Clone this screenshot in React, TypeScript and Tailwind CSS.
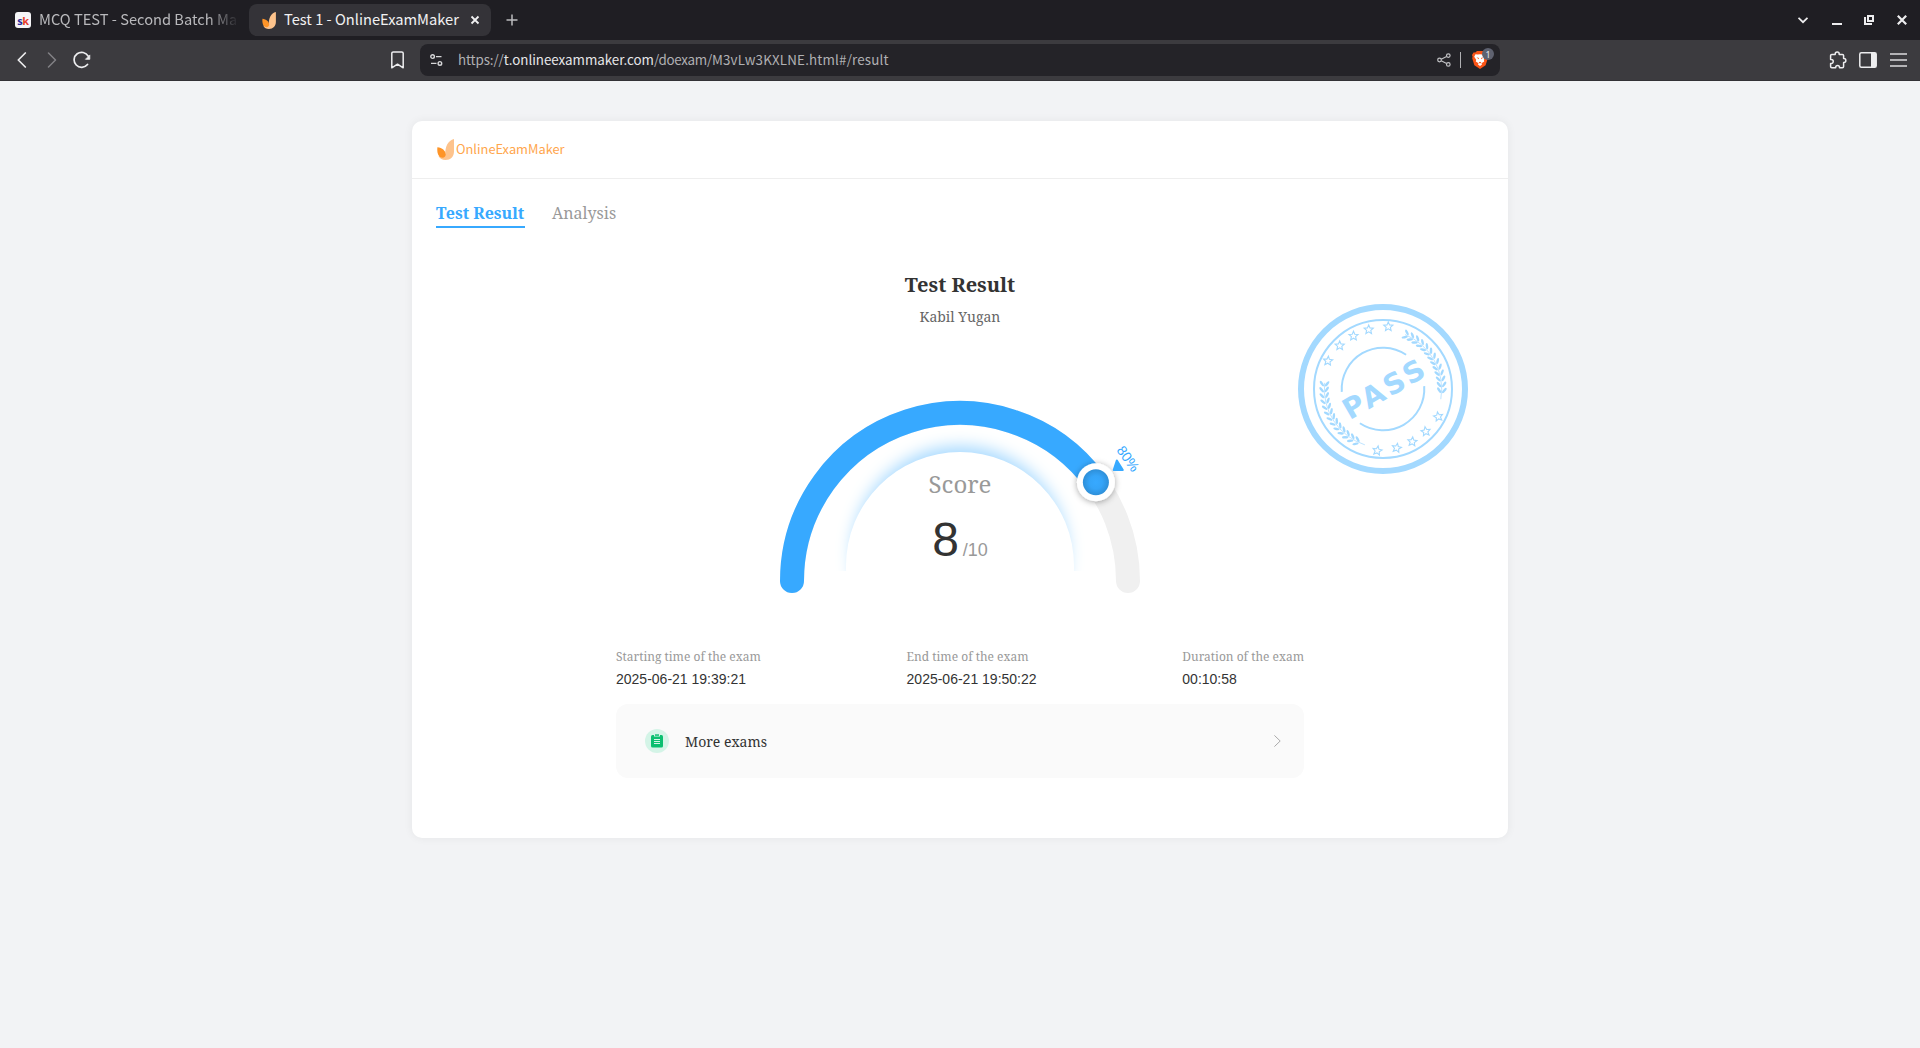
import type { ReactNode } from "react";

const STAMP = "#a3d9ff";

function LeafMark({ className }: { className: string }) {
  return (
    <svg viewBox="0 0 17 21" className={className}>
      <path d="M17 0v12.500c0 5-3.500 8.500-8.500 8.500-3.200 0-5.700-1.400-7-4l6.800-2C8 8 11 1.300 17 0Z" fill="#fdc38c" />
      <path d="M.4 8.200c4.800.5 8.200 3.400 8.300 7.300 0 1.800-1.300 3.200-3.200 3.200C2 18.700-.3 15 .4 8.200Z" fill="#fe9427" />
    </svg>
  );
}

function TabStrip() {
  return (
    <div className="flex h-10 items-center bg-[#1f1e23]">
      <div className="flex h-8 w-[249px] items-center pl-[15px]">
        <div className="flex size-4 shrink-0 items-center justify-center rounded-[3px] bg-[#f6f6f8] font-['Noto_Sans'] text-[11px] leading-none font-bold tracking-[-0.4px]">
          <span className="text-[#2a2a9c]">s</span>
          <span className="text-[#e8402c]">k</span>
        </div>
        <div className="mb-0.5 ml-2 w-[210px] [mask-image:linear-gradient(to_right,#000_168px,transparent_200px)] font-['Noto_Sans_CJK_SC',sans-serif] text-[14.67px] leading-[30px] whitespace-nowrap text-[#b9b9bc]">
          MCQ TEST - Second Batch Ma
        </div>
      </div>
      <div className="flex h-8 w-[242px] items-center rounded-lg bg-[#343338] pl-[13px]">
        <LeafMark className="h-[17px] w-[14px] shrink-0" />
        <span className="mb-0.5 ml-[8px] w-[175px] font-['Noto_Sans_CJK_SC',sans-serif] text-[14.67px] leading-[30px] whitespace-nowrap text-[#f1f1f2]">
          Test 1 - OnlineExamMaker
        </span>
        <svg viewBox="0 0 10 10" className="ml-[11px] size-[10px] shrink-0" stroke="#f1f1f2" strokeWidth="1.8">
          <path d="m1.500 1.500 7 7m0-7-7 7" />
        </svg>
      </div>
      <svg viewBox="0 0 12 12" className="ml-[15px] size-3" stroke="#bcbcbf" strokeWidth="1.500">
        <path d="M6 .5v11M.5 6h11" />
      </svg>
      <div className="ml-auto flex items-center pr-[13px]">
        <svg viewBox="0 0 10 10" className="size-[10px]" fill="none" stroke="#ededef" strokeWidth="1.800">
          <path d="m.5 2.800 4.500 4.400 4.500-4.400" />
        </svg>
        <svg viewBox="0 0 10 10" className="ml-6 size-[10px]" fill="#ededef">
          <path d="M0 8h10v2H0z" />
        </svg>
        <svg viewBox="0 0 10 10" className="ml-[22px] size-[10px]" fill="none" stroke="#ededef" strokeWidth="2">
          <path d="M4 1h5v5H4z" />
          <path d="M1 2v7h7" />
        </svg>
        <svg viewBox="0 0 10 10" className="ml-[23px] size-[10px]" stroke="#ededef" strokeWidth="2.200">
          <path d="m.8.8 8.400 8.400m0-8.400L.8 9.200" />
        </svg>
      </div>
    </div>
  );
}

function BraveShield() {
  return (
    <div className="relative ml-[11px] h-[18px] w-4">
      <svg viewBox="0 0 16 18" className="size-full">
        <path d="M5 0h6l1.700 1.600 1.800-.2L16 4l-.6 1.700.4 1.500-2.200 7L8 18l-5.600-3.800-2.200-7 .4-1.500L0 4l1.500-2.600 1.800.2Z" fill="#fb5417" />
        <path d="m3.500 3.200 2.300.4L8 3.200l2.200.4 2.300-.4 1.300 2.500-2 3 .4 1.700-2.700 1.800L10 13.600l-2 1.400-2-1.400.5-1.400-2.700-1.800.4-1.700-2-3Z" fill="#fff" />
        <path d="M4.500 6.300 7 7l-.4 1.300ZM11.500 6.300 9 7l.4 1.300ZM6.600 11.500 8 10.800l1.400.7L8 12.600Z" fill="#fb5417" />
      </svg>
      <span className="absolute -top-[3px] left-[10px] flex size-3 items-center justify-center rounded-full bg-[#5f6270] font-['Noto_Sans'] text-[9px] leading-none text-[#e4e5ea]">
        1
      </span>
    </div>
  );
}

function Toolbar() {
  return (
    <div className="flex h-[41px] items-center border-b border-[#333136] bg-[#3c3b3f]">
      <svg viewBox="0 0 10 16" className="ml-[17px] h-4 w-[10px]" fill="none" stroke="#ededef" strokeWidth="1.700" strokeLinecap="round" strokeLinejoin="round">
        <path d="M8.300 1 1.300 8l7 7" />
      </svg>
      <svg viewBox="0 0 10 16" className="ml-5 h-4 w-[10px]" fill="none" stroke="#828186" strokeWidth="1.500" strokeLinecap="round" strokeLinejoin="round">
        <path d="m1.500 1 7 7-7 7" />
      </svg>
      <svg viewBox="0 0 18 18" className="ml-4 size-[18px]" fill="none" stroke="#ededef" strokeWidth="1.700" strokeLinecap="round">
        <path d="M14.500 13.500A7.500 7.500 0 1 1 15.200 5.200" />
        <path d="M16.800 4.300v4h-4Z" fill="#ededef" strokeWidth="0.800" strokeLinejoin="round" />
      </svg>
      <svg viewBox="0 0 13 18" className="ml-[300px] h-[18px] w-[13px]" fill="none" stroke="#ededef" strokeWidth="1.500" strokeLinejoin="round">
        <path d="M.8 2.300C.8 1.400 1.400.9 2.200.9h8.600c.8 0 1.400.5 1.400 1.400v14.500l-5.700-3.600L.8 16.800Z" />
      </svg>
      <div className="ml-[16px] flex h-8 w-[1080px] items-center rounded-lg bg-[#242328]">
        <svg viewBox="0 0 13 12" className="ml-[10px] h-3 w-[13px]" fill="none" stroke="#d6d6d8" strokeWidth="1.400">
          <circle cx="2.600" cy="2.600" r="1.800" />
          <path d="M6 2.600h5.500M1 9.400h5.500" />
          <circle cx="9.900" cy="9.400" r="1.800" />
        </svg>
        <span className="mb-0.5 ml-[15px] font-['Noto_Sans_CJK_SC',sans-serif] text-[13.37px] leading-[30px] whitespace-nowrap text-[#b0b0b3]">
          <span className="tracking-[-0.12px]">https://</span>
          <span className="tracking-[-0.03px] text-[#e6e6e8]">t.onlineexammaker.com</span>
          <span className="tracking-[-0.25px]">/doexam/</span>
          <span className="tracking-[0.18px]">M3vLw3KXLNE.html#/result</span>
        </span>
        <svg viewBox="0 0 14 14" className="ml-auto size-[14px]" fill="none" stroke="#c2c2c5" strokeWidth="1.200">
          <circle cx="2.500" cy="7" r="1.800" />
          <circle cx="11.300" cy="2.600" r="1.800" />
          <circle cx="11.300" cy="11.400" r="1.800" />
          <path d="m4.200 6.200 5.400-2.700M4.200 7.800l5.400 2.700" />
        </svg>
        <div className="ml-[9px] h-4 w-px bg-[#b0b0b3]" />
        <BraveShield />
        <div className="w-3" />
      </div>
      <div className="ml-auto flex items-center pr-[13px]">
        <svg viewBox="0 0 18 18" className="size-[18px]" fill="none" stroke="#ededef" strokeWidth="1.500" strokeLinejoin="round">
          <path d="M2.800 3.400h3.400V2.900a2 2 0 0 1 4 0v.5h3.200c.7 0 1.200.5 1.200 1.200v2.900h.3a1.900 1.900 0 0 1 0 3.900h-.3v4.200c0 .7-.5 1.200-1.200 1.200h-2.900v-.5a1.900 1.900 0 0 0-3.800 0v.5H2.800c-.7 0-1.200-.5-1.200-1.200v-3h.6a2 2 0 0 0 0-4.100h-.6V4.600c0-.7.5-1.200 1.200-1.200Z" />
        </svg>
        <svg viewBox="0 0 18 16" className="ml-3 h-4 w-[18px]" fill="none" stroke="#ededef" strokeWidth="1.500">
          <rect x="0.800" y="0.800" width="16.400" height="14.400" rx="1.500" />
          <path d="M12 1h5v14h-5z" fill="#ededef" stroke="none" />
        </svg>
        <svg viewBox="0 0 17 14" className="ml-[13px] h-[14px] w-[17px]" stroke="#dcdcde" strokeWidth="1.500">
          <path d="M0 1h17M0 7h17M0 13h17" />
        </svg>
      </div>
    </div>
  );
}

function Star({ x, y, turn }: { x: number; y: number; turn: number }) {
  const points = Array.from({ length: 10 }, (_, i) => {
    const r = i % 2 === 0 ? 4.8 : 2.2;
    const a = (i * 36 - 90) * (Math.PI / 180);
    return `${(r * Math.cos(a)).toFixed(2)},${(r * Math.sin(a)).toFixed(2)}`;
  }).join(" ");
  return <polygon points={points} transform={`translate(${x} ${y}) rotate(${turn})`} fill="none" stroke={STAMP} strokeWidth="1.100" />;
}

/* One laurel branch, bent along a circle of radius 59 round the stamp's centre. */
function Branch({ from, step }: { from: number; step: number }) {
  const leaves: ReactNode[] = [];
  const flip = step < 0 ? "scale(1 -1)" : "scale(1 1)";
  for (let i = 0; i < 13; i++) {
    leaves.push(
      <g key={i} transform={`rotate(${from + step * i}) translate(58.700 0) ${flip}`}>
        <ellipse cx="2.600" cy="2.800" rx="1.250" ry="3.200" transform="rotate(-36 2.600 2.800)" />
        <ellipse cx="-2.600" cy="2.800" rx="1.250" ry="3.200" transform="rotate(36 -2.600 2.800)" />
      </g>,
    );
  }
  return <g fill={STAMP}>{leaves}</g>;
}

function arc(r: number, from: number, to: number) {
  const p = (a: number) => `${(r * Math.cos((a * Math.PI) / 180)).toFixed(2)} ${(r * Math.sin((a * Math.PI) / 180)).toFixed(2)}`;
  return `M${p(from)}A${r} ${r} 0 ${to - from > 180 ? 1 : 0} 1 ${p(to)}`;
}

const stars: [number, number, number][] = [
  [-55, -28, 5],
  [-43.3, -43.3, 0],
  [-29.5, -53, 0],
  [-14.3, -59.300, 0],
  [5.300, -62.300, 0],
  [55.300, 27.700, -10],
  [42.700, 42.500, -8],
  [29.300, 52.700, 5],
  [13.700, 59, 10],
  [-5.700, 61.700, 10],
];

function PassStamp() {
  return (
    <svg viewBox="-85 -85 170 170" className="absolute top-[183px] right-[40px] size-[170px]" fill="none" stroke={STAMP}>
      <circle r="82" strokeWidth="6" />
      <circle r="69" strokeWidth="2" />
      <path d={arc(41.300, 176, 304)} strokeWidth="2" />
      <path d={arc(41.300, -4, 124)} strokeWidth="2" />
      <g stroke="none">
        <Branch from={4} step={-5.7} />
        <Branch from={114} step={5.7} />
      </g>
      <path d={arc(58.700, -68, 10)} strokeWidth="0.700" />
      <path d={arc(58.700, 108, 186)} strokeWidth="0.700" />
      {stars.map(([x, y, t]) => (
        <Star key={`${x}`} x={x} y={y} turn={t} />
      ))}
      <text transform="rotate(-30)" x="-44.500" y="10.500" textLength="90" lengthAdjust="spacing" fill={STAMP} stroke="none" className="font-['DejaVu_Sans',sans-serif] text-[28.500px] font-bold">
        PASS
      </text>
    </svg>
  );
}

function Gauge() {
  return (
    <div className="relative mx-auto mt-[64px] h-[220px] w-[400px]">
      <div className="absolute top-0 left-0 h-[180px] w-full overflow-hidden">
        <div className="absolute top-[61px] left-[86px] size-[228px] rounded-full bg-white shadow-[0_-12px_16px_-6px_#a8daff]" />
      </div>
      <svg viewBox="0 0 400 220" className="absolute inset-0 size-full" fill="none">
        <defs>
          <radialGradient id="knob">
            <stop offset="0" stopColor="#37a9ff" />
            <stop offset=".5" stopColor="#35a4f8" />
            <stop offset="1" stopColor="#2e8fd8" />
          </radialGradient>
          <filter id="lift" x="-50%" y="-50%" width="200%" height="200%">
            <feDropShadow dx="0" dy="1" stdDeviation="3" floodColor="#000" floodOpacity=".35" />
          </filter>
        </defs>
        <path d="M32 190A168 168 0 0 1 368 190" stroke="#f0f0f0" strokeWidth="24" strokeLinecap="round" />
        <path d="M32 190A168 168 0 0 1 335.900 91.300" stroke="#37a9ff" strokeWidth="24" strokeLinecap="round" />
        <circle cx="335.900" cy="91.300" r="19" fill="#fff" filter="url(#lift)" />
        <circle cx="335.900" cy="91.300" r="13" fill="url(#knob)" />
        <path d="m356.800 69.300 6.100 9.700H353.600Z" fill="#37a9ff" stroke="#37a9ff" strokeWidth="1.800" strokeLinejoin="round" />
        <text transform="translate(365 70) rotate(54)" x="-14" y="1" fill="#37a9ff" className="font-['Liberation_Sans',sans-serif] text-[14px]">
          80%
        </text>
      </svg>
      <div className="relative pt-[75px] text-center">
        <div className="h-[35px] text-2xl leading-[35px] text-[#999]">Score</div>
        <div className="mt-[12px] flex items-baseline justify-center gap-1 font-['Liberation_Sans',sans-serif] leading-[54px]">
          <span className="text-5xl leading-[54px] text-[#333]">8</span>
          <span className="text-lg leading-none text-[#999]">/10</span>
        </div>
      </div>
    </div>
  );
}

const facts = [
  ["Starting time of the exam", "2025-06-21 19:39:21"],
  ["End time of the exam", "2025-06-21 19:50:22"],
  ["Duration of the exam", "00:10:58"],
];

export default function App() {
  return (
    <div className="min-h-[1048px] bg-[#f2f3f5] font-['Noto_Serif',serif]">
      <TabStrip />
      <Toolbar />
      <main className="relative mx-auto mt-10 h-[717px] w-[1096px] rounded-[10px] bg-white shadow-[0_0_10px_rgba(0,0,0,0.06)]">
        <header className="flex h-[58px] items-center border-b border-[#eee] pl-[25px]">
          <LeafMark className="h-[21px] w-[17px]" />
          <span className="mb-0.5 ml-[2px] font-['Noto_Sans_CJK_SC',sans-serif] text-[12.850px] leading-5 text-[#ffa64c]">OnlineExamMaker</span>
        </header>
        <nav className="flex gap-[27px] pt-[23px] pl-6 text-base leading-[23px]">
          <span className="h-[26px] w-[89px] border-b-2 border-[#37a9ff] font-bold text-[#37a9ff]">Test Result</span>
          <span className="text-[#999]">Analysis</span>
        </nav>
        <PassStamp />
        <h1 className="mt-[43px] text-center text-xl leading-7 font-bold text-[#333]">Test Result</h1>
        <p className="mt-2 text-center text-sm leading-5 text-[#666]">Kabil Yugan</p>
        <Gauge />
        <section className="mx-auto mt-9 flex w-[688px] justify-between">
          {facts.map(([label, value]) => (
            <div key={label}>
              <div className="text-xs leading-5 text-[#999]">{label}</div>
              <div className="mt-0.5 font-['Liberation_Sans',sans-serif] text-sm leading-5 text-[#333]">{value}</div>
            </div>
          ))}
        </section>
        <div className="mx-auto mt-[15px] flex h-[74px] w-[688px] items-center rounded-xl bg-[#fafafa] pr-[23px] pl-[29px]">
          <div className="flex size-6 items-center justify-center rounded-full bg-[#d4f4e7]">
            <svg viewBox="0 0 12 14" className="h-[14px] w-3">
              <rect y="1" width="12" height="12.500" rx="1.500" fill="#0bbf70" />
              <path d="M3 0h6v2.500H3Z" fill="#d4f4e7" />
              <path d="M4 .3h4v1.500H4Z" fill="#0bbf70" />
              <path d="M3 5.500h6M3 7.500h6M3 9.500h6" stroke="#d4f4e7" />
            </svg>
          </div>
          <span className="mt-0.5 ml-4 text-sm text-[#333]">More exams</span>
          <svg viewBox="0 0 7 12" className="ml-auto h-3 w-[7px]" fill="none" stroke="#aaa">
            <path d="m.4.400 5.800 5.600L.4 11.600" />
          </svg>
        </div>
      </main>
    </div>
  );
}
